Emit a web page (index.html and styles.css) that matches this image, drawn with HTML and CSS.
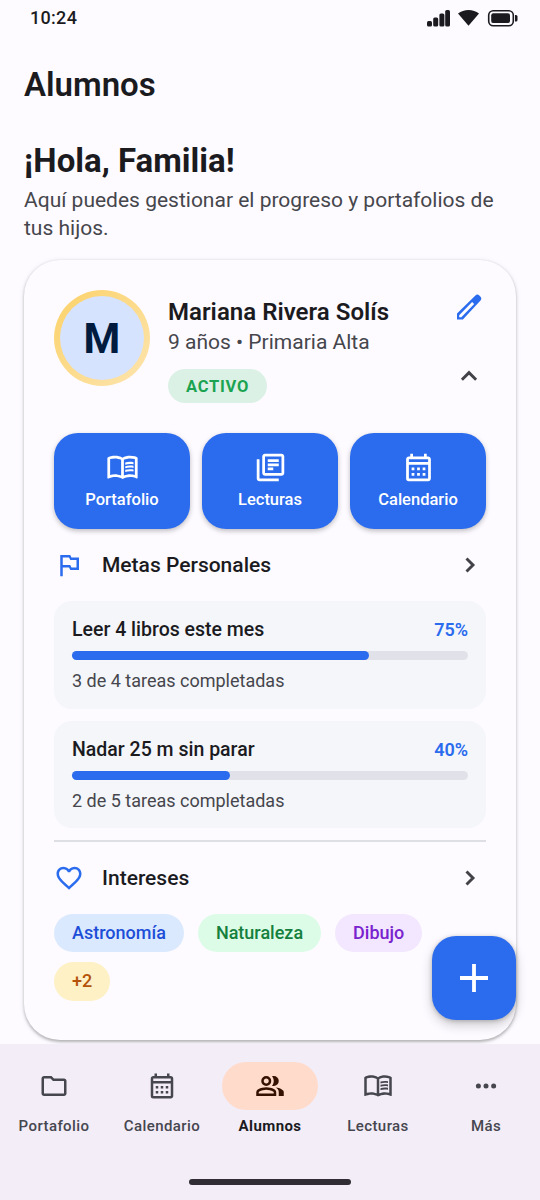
FILE: index.html
```html
<!DOCTYPE html>
<html lang="es">
<head>
<meta charset="utf-8">
<title>Alumnos</title>
<link rel="stylesheet" href="styles.css">
</head>
<body>
<svg class="sprite" aria-hidden="true">
  <symbol id="book" viewBox="0 1.100 24 24"><path d="M21 5c-1.11-.35-2.33-.5-3.5-.5-1.95 0-4.05.4-5.5 1.5-1.45-1.1-3.55-1.5-5.5-1.5S2.45 4.9 1 6v14.65c0 .25.25.5.5.5.1 0 .15-.05.25-.05C3.1 20.45 5.05 20 6.5 20c1.95 0 4.05.4 5.5 1.5 1.35-.85 3.8-1.5 5.5-1.5 1.65 0 3.35.3 4.75 1.05.1.05.15.05.25.05.25 0 .5-.25.5-.5V6c-.6-.45-1.25-.75-2-1zM3 18.5V7c1.1-.35 2.3-.5 3.5-.5 1.34 0 3.13.41 4.5.99v11.5C9.63 18.41 7.84 18 6.5 18c-1.2 0-2.4.15-3.5.5zm18 0c-1.1-.35-2.3-.5-3.5-.5-1.34 0-3.13.41-4.5.99V7.49c1.37-.59 3.16-.99 4.5-.99 1.2 0 2.4.15 3.5.5v11.5z"/><path d="M17.5 10.5c.88 0 1.73.09 2.5.26V9.24c-.79-.15-1.64-.24-2.5-.24-1.28 0-2.46.16-3.5.47v1.57c.99-.35 2.18-.54 3.5-.54zM17.5 13.16c.88 0 1.73.09 2.5.26V11.9c-.79-.15-1.64-.24-2.5-.24-1.28 0-2.46.16-3.5.47v1.57c.99-.34 2.18-.54 3.5-.54zM17.5 14.33c-1.28 0-2.46.16-3.5.47v1.57c.99-.35 2.18-.54 3.5-.54.88 0 1.73.09 2.5.26v-1.52c-.79-.16-1.64-.24-2.5-.24z"/></symbol>
  <symbol id="calendar" viewBox="0 0 24 24"><path d="M19 4h-1V2h-2v2H8V2H6v2H5c-1.11 0-2 .9-2 2v14a2 2 0 0 0 2 2h14c1.1 0 2-.9 2-2V6c0-1.1-.9-2-2-2zm0 16H5V10h14v10zm0-12H5V6h14v2zM9 14H7v-2h2v2zm4 0h-2v-2h2v2zm4 0h-2v-2h2v2zm-8 4H7v-2h2v2zm4 0h-2v-2h2v2zm4 0h-2v-2h2v2z"/></symbol>
</svg>
<div class="screen">
  <header class="status">
    <span class="clock">10:24</span>
    <svg class="status-icons" viewBox="0 0 96 20" width="96" height="20">
      <rect x="1" y="13" width="5" height="5.500" rx="1.500"/><rect x="7.200" y="9.500" width="5" height="9" rx="1.500"/><rect x="13.400" y="5.500" width="5" height="13" rx="1.500"/><rect x="19.200" y="2" width="4.800" height="16.500" rx="1.500"/>
      <path d="M42.500 17.800 32 5.500Q36.500 2 42.500 2T53 5.500Z"/>
      <rect x="62.700" y="2.700" width="24.600" height="15" rx="4.500" fill="none" stroke="#1b1b1f" stroke-width="1.600"/><rect x="65.200" y="5.300" width="18.800" height="9.800" rx="2.200"/><path d="M89 7h1q1.500 0 1.500 1.500v3.500q0 1.500-1.500 1.500h-1z"/>
    </svg>
  </header>
  <h1 class="title">Alumnos</h1>
  <section class="intro">
    <h2 class="greeting">¡Hola, Familia!</h2>
    <p class="lead">Aquí puedes gestionar el progreso y portafolios de tus hijos.</p>
  </section>
  <main class="card">
    <div class="student">
      <div class="avatar"><span>M</span></div>
      <div class="info">
        <h3 class="name">Mariana Rivera Solís</h3>
        <p class="meta">9 años • Primaria Alta</p>
        <span class="badge">ACTIVO</span>
      </div>
      <div class="controls">
        <svg class="pencil" viewBox="0 0 26 26" width="26" height="26"><path fill-rule="evenodd" d="M1 25.500v-5.900L19.400 1.400q2-1.700 4.200.3l.7.7q1.900 2 .2 4.100L6.900 25.500ZM3.200 21.200v2.100h2.100L18.200 10.100l-2.100-2.100Z"/></svg>
        <svg class="chevron" viewBox="0 0 18 12" width="18" height="12"><path d="m1.900 9.700 7.100-7.100 7.100 7.100"/></svg>
      </div>
    </div>
    <div class="actions">
      <div class="action"><svg><use href="#book"/></svg><span>Portafolio</span></div>
      <div class="action"><svg viewBox="0 0 24 24"><path d="M4 6H2v14c0 1.100.9 2 2 2h14v-2H4V6zm16-4H8c-1.100 0-2 .9-2 2v12c0 1.100.9 2 2 2h12c1.100 0 2-.9 2-2V4c0-1.100-.9-2-2-2zm0 14H8V4h12v12zM10 9h8v2h-8zm0 3h4v2h-4zm0-6h8v2h-8z"/></svg><span>Lecturas</span></div>
      <div class="action"><svg><use href="#calendar"/></svg><span>Calendario</span></div>
    </div>
    <div class="section-head goals-head">
      <svg class="lead-icon" viewBox="0 0 24 24"><path d="M14 6l-1-2H5v17h2v-7h5l1 2h7V6h-6zm4 8h-4l-1-2H7V6h5l1 2h5v6z"/></svg>
      <h4>Metas Personales</h4>
      <svg class="chevron" viewBox="0 0 12 18" width="12" height="18"><path d="m2.500 2.500 6.500 6.500-6.500 6.500"/></svg>
    </div>
    <div class="goals">
      <div class="goal">
        <div class="goal-top"><span>Leer 4 libros este mes</span><b>75%</b></div>
        <div class="track"><div class="fill" style="width:75%"></div></div>
        <p>3 de 4 tareas completadas</p>
      </div>
      <div class="goal">
        <div class="goal-top"><span>Nadar 25 m sin parar</span><b>40%</b></div>
        <div class="track"><div class="fill" style="width:40%"></div></div>
        <p>2 de 5 tareas completadas</p>
      </div>
    </div>
    <div class="divider"></div>
    <div class="section-head interests-head">
      <svg class="lead-icon" viewBox="0 0 24 24"><path d="M16.500 3c-1.740 0-3.410.81-4.500 2.090C10.910 3.810 9.240 3 7.500 3 4.420 3 2 5.420 2 8.500c0 3.780 3.400 6.860 8.550 11.540L12 21.350l1.450-1.320C18.600 15.360 22 12.280 22 8.500 22 5.420 19.580 3 16.500 3zm-4.400 15.550l-.1.100-.1-.1C7.140 14.240 4 11.390 4 8.500 4 6.500 5.500 5 7.500 5c1.540 0 3.040.99 3.570 2.360h1.870C13.460 5.990 14.960 5 16.500 5c2 0 3.500 1.500 3.500 3.500 0 2.890-3.140 5.740-7.900 10.050z"/></svg>
      <h4>Intereses</h4>
      <svg class="chevron" viewBox="0 0 12 18" width="12" height="18"><path d="m2.500 2.500 6.500 6.500-6.500 6.500"/></svg>
    </div>
    <div class="chips">
      <span class="chip blue">Astronomía</span><span class="chip green">Naturaleza</span><span class="chip purple">Dibujo</span><span class="chip amber">+2</span>
    </div>
  </main>
  <div class="fab"><svg viewBox="0 0 28 28" width="28" height="28"><path d="M12.100 0h3.800v12.100H28v3.800H15.900V28h-3.800V15.900H0v-3.800h12.100z"/></svg></div>
  <nav class="nav">
    <div class="tabs">
      <div class="tab"><div class="pill"><svg viewBox="0 0 24 24"><path d="M4 20q-.825 0-1.412-.587T2 18V6q0-.825.588-1.412T4 4h6l2 2h8q.825 0 1.413.588T22 8v10q0 .825-.587 1.413T20 20zm0-2h16V8h-8.825l-2-2H4z"/></svg></div><span>Portafolio</span></div>
      <div class="tab"><div class="pill"><svg><use href="#calendar"/></svg></div><span>Calendario</span></div>
      <div class="tab active"><div class="pill"><svg viewBox="0 0 24 24"><path d="M1 20v-2.800q0-.85.438-1.562T2.600 14.550q1.550-.775 3.150-1.162T9 13t3.250.388 3.150 1.162q.725.375 1.163 1.088T17 17.200V20zm18 0v-3q0-1.100-.612-2.113T16.650 13.150q1.275.15 2.400.513t2.100.887q.9.500 1.375 1.112T23 17v3zM9 12q-1.650 0-2.825-1.175T5 8t1.175-2.825T9 4t2.825 1.175T13 8t-1.175 2.825T9 12m10-4q0 1.650-1.175 2.825T15 12q-.275 0-.7-.062t-.7-.138q.675-.8 1.038-1.775T15 8t-.363-2.025T13.600 4.200q.35-.125.7-.163T15 4q1.650 0 2.825 1.175T19 8M3 18h12v-.8q0-.275-.137-.5t-.363-.35q-1.350-.675-2.725-1.012T9 15t-2.775.338T3.500 16.350q-.225.125-.363.350T3 17.200zm6-8q.825 0 1.413-.587T11 8t-.587-1.412T9 6t-1.412.588T7 8t.588 1.413T9 10"/></svg></div><span>Alumnos</span></div>
      <div class="tab"><div class="pill"><svg><use href="#book"/></svg></div><span>Lecturas</span></div>
      <div class="tab"><div class="pill"><svg viewBox="0 0 24 24"><circle cx="5.900" cy="12" r="2"/><circle cx="12" cy="12" r="2"/><circle cx="18.100" cy="12" r="2"/></svg></div><span>Más</span></div>
    </div>
    <div class="home-bar"></div>
  </nav>
</div>
</body>
</html>
```
FILE: styles.css
```css
* { box-sizing: border-box; }
body, h1, h2, h3, h4, p { margin: 0; }
body { background: #fdfbff; color: #1b1b1f; font-family: Roboto, sans-serif; }
svg { display: block; fill: currentColor; flex: none; }
.sprite { position: absolute; width: 0; height: 0; }
.screen { position: relative; width: 540px; height: 1200px; overflow: hidden; display: flex; flex-direction: column; }

.status { height: 36px; padding: 0 18px 0 30px; display: flex; align-items: center; justify-content: space-between; }
.clock { font-size: 18px; font-weight: 500; letter-spacing: .3px; line-height: 20px; margin-top: -1px; }
.status-icons { color: #1b1b1f; }

.title { height: 96px; padding-left: 24px; font-size: 33px; font-weight: 600; line-height: 97px; }
.intro { height: 128px; padding: 9px 24px 0; }
.greeting { font-size: 33px; font-weight: 700; line-height: 40px; }
.lead { margin-top: 5px; color: #46464c; font-size: 21px; line-height: 28px; }

.card { flex: none; width: 492px; height: 780px; margin-left: 24px; padding: 30px; border-radius: 36px; background: #fdfbff; box-shadow: 0 1.5px 3px rgba(0,0,0,.26), 0 1px 6px rgba(0,0,0,.08); }
.student { display: flex; height: 114px; }
.avatar { width: 96px; height: 96px; padding: 6px; border-radius: 50%; background: linear-gradient(135deg, #fbd168, #fde5b0); }
.avatar span { display: flex; align-items: center; justify-content: center; height: 84px; border-radius: 50%; background: #d6e3ff; color: #001b3e; font-size: 42px; font-weight: 700; }
.info { flex: 1; padding: 6px 0 0 18px; }
.name { font-size: 24px; font-weight: 600; line-height: 32px; letter-spacing: .03px; }
.meta { color: #46464c; font-size: 21px; line-height: 29px; }
.badge { display: flex; width: 99px; height: 34px; margin-top: 12px; align-items: center; justify-content: center; border-radius: 17px; background: #dcf1e5; color: #1aa350; font-size: 16.5px; font-weight: 700; letter-spacing: .75px; }
.controls { width: 34px; padding-top: 4px; display: flex; flex-direction: column; align-items: center; gap: 50px; }
.pencil { color: #2b6cee; }
.chevron path { fill: none; stroke: #424248; stroke-width: 2.900; }

.actions { display: grid; grid-template-columns: repeat(3, 1fr); gap: 12px; margin-top: 29px; }
.action { height: 96px; padding-top: 18px; display: flex; flex-direction: column; align-items: center; border-radius: 24px; background: #2b6cee; color: #fff; box-shadow: 0 2px 5px rgba(0,0,0,.25); }
.action svg { width: 33px; height: 33px; }
.action span { margin-top: 5px; font-size: 16.5px; font-weight: 500; line-height: 22px; }

.section-head { display: flex; align-items: center; height: 36px; padding-right: 10px; }
.lead-icon { width: 30px; height: 30px; color: #2b6cee; }
.section-head h4 { flex: 1; margin-left: 18px; font-size: 21px; font-weight: 500; }
.goals-head { margin-top: 18px; }
.goals { display: grid; gap: 12px; margin-top: 18px; }
.goal { height: 107.500px; padding: 16px 18px 14px; border-radius: 18px; background: #f4f6fa; }
.goal-top { display: flex; justify-content: space-between; line-height: 26px; font-size: 19.5px; font-weight: 500; }
.goal-top b { color: #2b6cee; font-size: 18px; font-weight: 600; line-height: 25px; }
.track { height: 9px; margin-top: 8.400px; border-radius: 5px; background: #e1e2e9; }
.fill { height: 9px; border-radius: 5px; background: #2b6cee; }
.goal p { margin-top: 9px; color: #46464c; font-size: 18px; line-height: 24px; }
.divider { height: 1.500px; margin-top: 12px; background: #dedfe4; }
.interests-head { margin-top: 18px; }
.chips { display: flex; flex-wrap: wrap; gap: 10px 14px; margin-top: 18px; }
.chip { height: 38.500px; padding: 0 18px; border-radius: 20px; font-size: 18px; font-weight: 500; line-height: 38px; }
.blue { background: #dbe9fe; color: #1d4ed8; }
.green { background: #dcfce7; color: #15803d; }
.purple { background: #f2e7fe; color: #7922ce; }
.amber { background: #fef1c5; color: #b45309; }

.fab { position: absolute; left: 432px; top: 936px; width: 84px; height: 84px; display: grid; place-items: center; border-radius: 24px; background: #2b6cee; color: #fff; box-shadow: 0 5px 12px rgba(0,0,0,.2), 0 1px 4px rgba(0,0,0,.2); }

.nav { position: relative; height: 156px; margin-top: 4px; background: #f3edf7; color: #46464f; }
.tabs { display: grid; grid-template-columns: repeat(5, 1fr); padding-top: 18px; }
.tab { display: flex; flex-direction: column; align-items: center; gap: 6px; font-size: 15px; font-weight: 500; line-height: 20px; letter-spacing: .42px; }
.pill { display: grid; place-items: center; width: 96px; height: 48px; border-radius: 24px; }
.pill svg { width: 30px; height: 30px; }
.active { color: #1b1b1f; font-weight: 700; }
.active .pill { background: #ffdbcb; color: #341100; }
.home-bar { width: 162px; height: 6px; margin: 43px auto 0; border-radius: 3px; background: #302d35; }
```
